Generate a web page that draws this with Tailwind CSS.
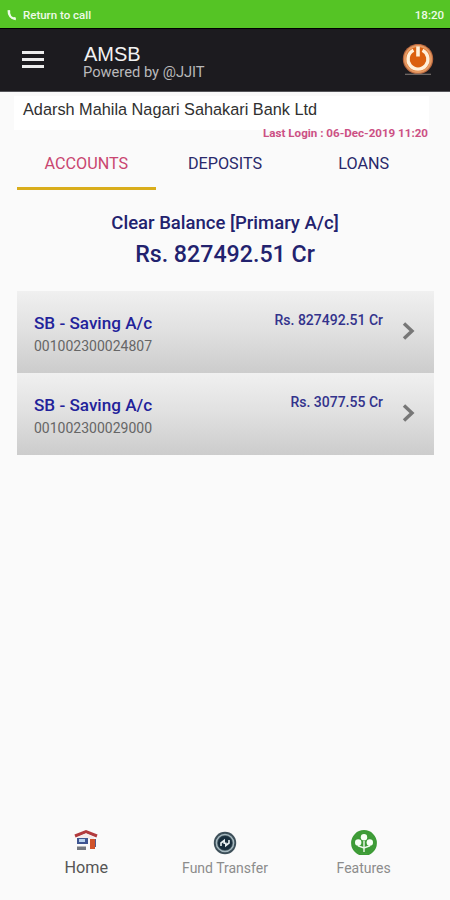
<!DOCTYPE html>
<html lang="en">
<head>
  <meta charset="UTF-8" />
  <title>AMSB</title>
  <meta name="viewport" content="width=device-width, initial-scale=1.0" />
  <script src="https://cdn.jsdelivr.net/npm/@tailwindcss/browser@4"></script>
</head>
<body class="bg-[#fafafa] h-[900px] flex flex-col overflow-hidden whitespace-nowrap font-['Roboto','Liberation_Sans',sans-serif]">
  <!-- Status bar -->
  <div class="h-7 shrink-0 bg-[#55c425] text-[#eefbe8] flex items-center pl-[7px] pr-[6px] pt-[3px] text-[11.5px] font-medium">
    <svg class="w-[10px] h-[12px] mr-[6px] -mt-0.5" viewBox="0 0 10 12" fill="none" stroke="#eefbe8" stroke-width="2.4">
      <path d="M1.7 1.2C1.5 6 4 9.8 8.8 10" />
      <path d="M1.2 2.5h2M7.4 10.3V8.3" stroke-width="2" />
    </svg>
    <span>Return to call</span>
    <span class="ml-auto">18:20</span>
  </div>

  <!-- App bar -->
  <header class="h-16 shrink-0 bg-[#1c1b1f] border-t border-black border-b border-b-[#55555a] flex items-center pl-[22px] pr-4">
    <div class="w-[22px] space-y-1 -mt-0.5">
      <div class="h-[3px] bg-[#ececec]"></div>
      <div class="h-[3px] bg-[#ececec]"></div>
      <div class="h-[3px] bg-[#ececec]"></div>
    </div>
    <div class="ml-[39px] pt-[5px]">
      <h1 class="font-['Liberation_Sans',sans-serif] text-[20px] leading-5 text-[#f2f2f2] ml-px">AMSB</h1>
      <p class="text-[14.7px] leading-[17px] text-[#b9b9bb]">Powered by @JJIT</p>
    </div>
    <svg class="w-8 h-8 ml-auto" viewBox="0 0 32 32">
      <circle cx="16" cy="15" r="15.2" fill="#b9683f" />
      <circle cx="16" cy="15" r="14" fill="#e59a62" />
      <circle cx="16" cy="15" r="12" fill="#db600f" />
      <path d="M11.5 6.2A10 10 0 1 0 20.5 6.2" fill="none" stroke="#fff0da" stroke-width="3.4" />
      <path d="M16 2.5v10" stroke="#fff0da" stroke-width="3.6" />
      <path d="M3 30.3h26" stroke="#77706d" stroke-width="1.2" />
    </svg>
  </header>

  <!-- Bank name -->
  <div class="mt-1 ml-[14px] mr-[21px] h-[34px] shrink-0 bg-white pl-[9px] pt-px">
    <p class="font-['Liberation_Sans',sans-serif] text-[16.3px] leading-6 text-[#303030]">Adarsh Mahila Nagari Sahakari Bank Ltd</p>
  </div>
  <p class="-mt-[3px] mr-[22px] text-right text-[11.6px] leading-3 font-bold text-[#cc5084]">Last Login : 06-Dec-2019 11:20</p>

  <!-- Tabs -->
  <div class="mx-[17px] h-[51px] shrink-0 grid grid-cols-3 text-center text-[16.2px] text-[#29296b]">
    <div class="pt-[13px] border-b-[3px] border-[#d9ad1b] text-[#c94670]">ACCOUNTS</div>
    <div class="pt-[13px]">DEPOSITS</div>
    <div class="pt-[13px]">LOANS</div>
  </div>

  <!-- Balance -->
  <section class="pt-[21px] text-center font-medium text-[#22226e]">
    <p class="text-[18.5px] leading-6">Clear Balance [Primary A/c]</p>
    <p class="text-[23.2px] leading-8 mt-[3px]">Rs. 827492.51 Cr</p>
  </section>

  <!-- Accounts -->
  <section class="ml-[17px] mt-[21px] mr-4">
    <div class="h-[82px] bg-linear-to-b from-[#f0f0f0] via-[#e0e0e0] to-[#cccccc] flex pl-[17px] pr-[19px]">
      <div class="pt-5">
        <p class="text-[17.1px] leading-6 font-medium text-[#22229a]">SB - Saving A/c</p>
        <p class="text-[14px] leading-[22px] text-[#666]">001002300024807</p>
      </div>
      <p class="ml-auto pt-5 text-[14px] leading-[19px] font-medium text-[#33338c]">Rs. 827492.51 Cr</p>
      <svg class="w-[13px] h-5 ml-[19px] mt-[30px]" viewBox="0 0 13 20" fill="none" stroke="#777" stroke-width="3.4">
        <path d="M2 2.5l8 7.5L2 17.5" />
      </svg>
    </div>
    <div class="h-[82px] bg-linear-to-b from-[#f0f0f0] via-[#e0e0e0] to-[#cccccc] flex pl-[17px] pr-[19px]">
      <div class="pt-5">
        <p class="text-[17.1px] leading-6 font-medium text-[#22229a]">SB - Saving A/c</p>
        <p class="text-[14px] leading-[22px] text-[#666]">001002300029000</p>
      </div>
      <p class="ml-auto pt-5 text-[14px] leading-[19px] font-medium text-[#33338c]">Rs. 3077.55 Cr</p>
      <svg class="w-[13px] h-5 ml-[19px] mt-[30px]" viewBox="0 0 13 20" fill="none" stroke="#777" stroke-width="3.4">
        <path d="M2 2.5l8 7.5L2 17.5" />
      </svg>
    </div>
  </section>

  <!-- Bottom navigation -->
  <nav class="mt-auto mx-[17px] h-[71px] grid grid-cols-3 text-center text-[14px] text-[#8c8c8c]">
    <div class="flex flex-col items-center">
      <svg class="w-[26px] h-[26px]" viewBox="0 0 26 26">
        <path d="M2 7L13 2.6 24 7" fill="none" stroke="#b23a3d" stroke-width="3" />
        <path d="M5 8l8-3.5L21 8v2H5z" fill="#f4e9e9" />
        <rect x="4" y="9" width="11" height="6" fill="#3e5592" />
        <rect x="6" y="10" width="6" height="3" fill="#b8d3ee" />
        <rect x="4" y="17.5" width="9" height="3.5" fill="#747880" />
        <rect x="17" y="10" width="5" height="10" fill="#d1532b" />
        <path d="M22.5 10v8" stroke="#54598b" />
      </svg>
      <span class="text-[16.2px] leading-[25px] text-[#555]">Home</span>
    </div>
    <div class="flex flex-col items-center">
      <svg class="w-[26px] h-[26px]" viewBox="0 0 26 26" fill="none">
        <circle cx="13" cy="14" r="11.2" fill="#3d4f59" />
        <circle cx="13" cy="14" r="8.6" stroke="#a5b8bf" stroke-width="1.5" />
        <circle cx="13" cy="14" r="7" fill="#172d3c" />
        <path d="M9 17v-3l3.2-2.5v2.7h1.6v2.3L17 14v-3" stroke="#e8f0f2" stroke-width="1.6" />
      </svg>
      <span class="leading-[26px]">Fund Transfer</span>
    </div>
    <div class="flex flex-col items-center">
      <svg class="w-[28px] h-[26px]" viewBox="0 0 28 26" fill="none">
        <circle cx="14" cy="14" r="11.7" fill="#f7fff5" stroke="#3d9b36" stroke-width="2.4" />
        <circle cx="14" cy="14" r="11" fill="#3d9b36" />
        <path d="M14 12v11M8.5 14v3l5.5 2 5.5-2v-3" stroke="#eef8ec" stroke-width="1.4" />
        <circle cx="14" cy="8.2" r="3.2" fill="#f7fff5" />
        <circle cx="8.2" cy="13.5" r="3.2" fill="#f7fff5" />
        <circle cx="19.8" cy="13.5" r="3.2" fill="#f7fff5" />
      </svg>
      <span class="leading-[26px]">Features</span>
    </div>
  </nav>
</body>
</html>
